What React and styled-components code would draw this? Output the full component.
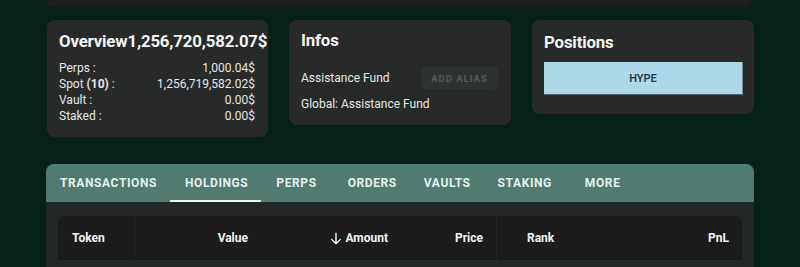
import React from "react";
import styled, { createGlobalStyle } from "styled-components";

const GlobalStyle = createGlobalStyle`
  body {
    margin: 0;
    background: #072019;
    font-family: Roboto, "Liberation Sans", sans-serif;
    color: #eef1f0;
  }
`;

const Page = styled.div`
  width: 708px;
  margin-left: 46px;
  display: flex;
  flex-direction: column;
`;

const TopBar = styled.div`
  height: 7px;
  margin: 0 2px 0 1px;
  background: #1d1f1e;
  border-radius: 0 0 6px 6px;
`;

const Cards = styled.div`
  display: grid;
  grid-template-columns: 221px 222px 222px;
  gap: 21px;
  margin: 13px 0 0 1px;
  align-items: start;
`;

const Card = styled.div`
  background: #272a29;
  border-radius: 8px;
  padding: ${(p) => p.$pad || "9px 12px 13px"};
  display: flex;
  flex-direction: column;
`;

const Title = styled.div`
  font-size: 16.8px;
  font-weight: 700;
  line-height: 24px;
  color: #f4f6f5;
  white-space: nowrap;
  letter-spacing: -0.15px;
`;

const Stats = styled.div`
  margin-top: 7px;
  display: flex;
  flex-direction: column;
  padding-right: 1px;
`;

const Stat = styled.div`
  display: flex;
  justify-content: space-between;
  font-size: 12px;
  line-height: 16px;
  color: #e4e7e6;
  b {
    font-weight: 700;
  }
`;

const InfoRow = styled.div`
  display: flex;
  align-items: center;
  justify-content: space-between;
  font-size: 12px;
  color: #e4e7e6;
  height: 22px;
  margin-top: ${(p) => p.$top || 0}px;
`;

const AliasButton = styled.button`
  width: 77px;
  height: 22px;
  margin-right: 1px;
  border: none;
  border-radius: 4px;
  background: #2d3230;
  color: #4d5c57;
  font-family: Roboto, "Liberation Sans", sans-serif;
  font-size: 9.5px;
  font-weight: 700;
  letter-spacing: 1px;
  padding: 0;
`;

const PositionButton = styled.button`
  margin-top: 8px;
  height: 33px;
  width: 100%;
  background: #add8e8;
  border: none;
  border-right: 1px solid #6d8a94;
  border-bottom: 1px solid #4b6370;
  color: #1f3a4c;
  font-family: Roboto, "Liberation Sans", sans-serif;
  font-size: 11px;
  font-weight: 600;
`;

const Panel = styled.div`
  margin-top: 27px;
  background: #232726;
  border-radius: 8px 8px 0 0;
  overflow: hidden;
  height: 103px;
`;

const TabBar = styled.div`
  display: flex;
  height: 38px;
  background: #4f7b71;
`;

const Tab = styled.div`
  position: relative;
  display: flex;
  align-items: center;
  padding: 0 ${(p) => p.$r}px 0 ${(p) => p.$l}px;
  font-size: 12px;
  font-weight: 700;
  letter-spacing: 0.6px;
  color: #e6efec;
  ${(p) =>
    p.$active &&
    `
    &::after {
      content: "";
      position: absolute;
      left: 0;
      right: 0;
      bottom: 0;
      height: 2px;
      background: #f2f5f4;
    }
  `}
`;

const TableWrap = styled.div`
  padding: 14px 12px 0;
`;

const HeadRow = styled.div`
  display: grid;
  grid-template-columns: 77px 113px 140px 109px 87px 1fr;
  height: 44px;
  background: #1c1c1c;
  border-radius: 6px 6px 0 0;
  border-bottom: 1px solid #2a2c2b;
`;

const HeadCell = styled.div`
  display: flex;
  align-items: center;
  justify-content: ${(p) => (p.$right ? "flex-end" : "flex-start")};
  padding-left: ${(p) => p.$pl || 0}px;
  padding-right: ${(p) => p.$pr || 0}px;
  font-size: 12px;
  font-weight: 700;
  color: #f1f3f2;
  border-right: ${(p) => (p.$sep ? "1px solid #252726" : "none")};
  gap: 2px;
`;

const tabs = [
  { label: "TRANSACTIONS", l: 14, r: 13 },
  { label: "HOLDINGS", l: 15, r: 13, active: true },
  { label: "PERPS", l: 15, r: 15 },
  { label: "ORDERS", l: 16, r: 13 },
  { label: "VAULTS", l: 14, r: 14 },
  { label: "STAKING", l: 13, r: 16 },
  { label: "MORE", l: 17, r: 14 },
];

const stats = [
  ["Perps :", "1,000.04$"],
  [<>Spot <b>(10)</b> :</>, "1,256,719,582.02$"],
  ["Vault :", "0.00$"],
  ["Staked :", "0.00$"],
];

const ArrowDown = () => (
  <svg width="14" height="15" viewBox="0 0 24 24" fill="none" stroke="#f1f3f2" strokeWidth="2.4" strokeLinecap="round">
    <path d="M12 3v18M4.5 13.5L12 21l7.5-7.5" />
  </svg>
);

export default function App() {
  return (
    <>
      <GlobalStyle />
      <Page>
        <TopBar />
        <Cards>
          <Card $pad="9px 12px 13px">
            <Title>Overview1,256,720,582.07$</Title>
            <Stats>
              {stats.map(([k, v], i) => (
                <Stat key={i}>
                  <span>{k}</span>
                  <span>{v}</span>
                </Stat>
              ))}
            </Stats>
          </Card>
          <Card $pad="8px 12px 10px">
            <Title>Infos</Title>
            <InfoRow $top={15}>
              <span>Assistance Fund</span>
              <AliasButton>ADD ALIAS</AliasButton>
            </InfoRow>
            <InfoRow $top={4}>
              <span>Global: Assistance Fund</span>
            </InfoRow>
          </Card>
          <Card $pad="10px 11px 19px 12px">
            <Title>Positions</Title>
            <PositionButton>HYPE</PositionButton>
          </Card>
        </Cards>
        <Panel>
          <TabBar>
            {tabs.map((t) => (
              <Tab key={t.label} $l={t.l} $r={t.r} $active={t.active}>
                {t.label}
              </Tab>
            ))}
          </TabBar>
          <TableWrap>
            <HeadRow>
              <HeadCell $sep $pl={14}>Token</HeadCell>
              <HeadCell $right>Value</HeadCell>
              <HeadCell $right>
                <ArrowDown />
                Amount
              </HeadCell>
              <HeadCell $right $sep $pr={13}>Price</HeadCell>
              <HeadCell $pl={30}>Rank</HeadCell>
              <HeadCell $right $pr={13}>PnL</HeadCell>
            </HeadRow>
          </TableWrap>
        </Panel>
      </Page>
    </>
  );
}
